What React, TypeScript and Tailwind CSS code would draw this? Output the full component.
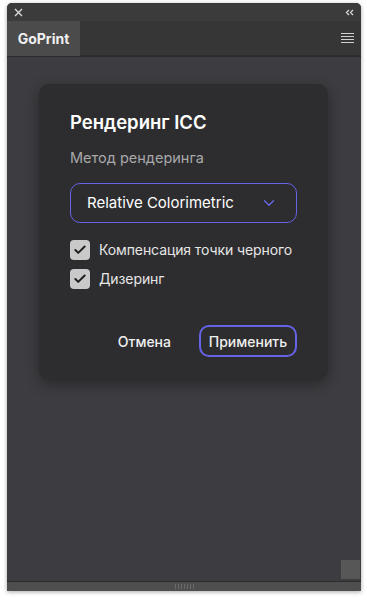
import { Check, ChevronDown } from 'lucide-react';

function Checkbox({ label }: { label: string }) {
  return (
    <div className="flex items-center gap-[9px]">
      <div className="w-[20px] h-[20px] rounded-[4px] bg-[#c9c9c9] flex items-center justify-center shrink-0">
        <Check className="w-[14px] h-[14px] text-[#1e1e1e]" strokeWidth={3.4} />
      </div>
      <span className="text-[14px] tracking-[-0.1px] text-[#e6e6e6] whitespace-nowrap">{label}</span>
    </div>
  );
}

export default function App() {
  return (
    <div className="w-[367px] h-[600px] bg-white pt-[3px] px-[7px]" style={{ fontFamily: 'Inter, "Noto Sans", sans-serif' }}>
      <div className="w-[354px] h-[588px] flex flex-col rounded-t-[5px] overflow-hidden shadow-[0_1px_4px_rgba(0,0,0,0.35)] bg-[#3c3c3f]">
        {/* title bar */}
        <div className="h-[18px] bg-[#3b3b3b] flex items-center justify-between px-[7px] shrink-0">
          <svg width="9" height="9" viewBox="0 0 9 9">
            <path d="M1 1L8 8M8 1L1 8" stroke="#d8d8d8" strokeWidth="1.4" />
          </svg>
          <svg width="9" height="7" viewBox="0 0 9 7">
            <path d="M4 1L1.5 3.5L4 6M8 1L5.5 3.5L8 6" stroke="#d8d8d8" strokeWidth="1.3" fill="none" />
          </svg>
        </div>
        {/* tab row */}
        <div className="h-[36px] bg-[#363636] flex items-stretch border-b border-[#2a2a2a] shrink-0">
          <div className="w-[73px] bg-[#4b4b4b] flex items-center justify-center text-[#f0f0f0] text-[14px] font-bold">
            GoPrint
          </div>
          <div className="flex-1 border-b border-[#2e2e2e] flex items-center justify-end pr-[7px]">
            <div className="flex flex-col gap-[1.5px] w-[13px]">
              <div className="h-[1.5px] bg-[#cfcfcf]" />
              <div className="h-[1.5px] bg-[#cfcfcf]" />
              <div className="h-[1.5px] bg-[#cfcfcf]" />
              <div className="h-[1.5px] bg-[#cfcfcf]" />
            </div>
          </div>
        </div>
        {/* body */}
        <div className="flex-1 bg-[#3d3d41] flex flex-col relative">
          <div className="pt-[27px] pl-[32px]">
            <div className="w-[289px] h-[296px] rounded-[10px] bg-[#2d2d2f] shadow-[0_4px_14px_rgba(0,0,0,0.35)] px-[31px] pt-[26px]">
              <div className="text-[18.5px] font-semibold text-white leading-[24px]">Рендеринг ICC</div>
              <div className="mt-[14px] text-[14.5px] text-[#a8a8aa] leading-[20px]">Метод рендеринга</div>
              <div className="mt-[15px] h-[40px] w-[227px] rounded-[10px] border-[1.5px] border-[#6563e6] flex items-center justify-between pl-[16px] pr-[18px]">
                <span className="text-[15px] text-white">Relative Colorimetric</span>
                <ChevronDown className="w-[18px] h-[18px] text-[#6d6bf0]" strokeWidth={1.6} />
              </div>
              <div className="mt-[16px] flex flex-col gap-[8px]">
                <Checkbox label="Компенсация точки черного" />
                <Checkbox label="Дизеринг" />
              </div>
              <div className="mt-[36px] flex items-center justify-end gap-[28px]">
                <span className="text-[14px] font-medium text-[#f0f0f0]">Отмена</span>
                <div className="w-[98px] h-[32px] rounded-[10px] border-2 border-[#6563e6] flex items-center justify-center text-[14px] font-medium text-[#f0f0f0]">
                  Применить
                </div>
              </div>
            </div>
          </div>
          <div className="absolute right-[1px] bottom-[2px] w-[19px] h-[19px] bg-[#575757]" />
        </div>
        {/* bottom bar */}
        <div className="h-[10px] bg-[#4e4e4e] border-t border-[#2c2c2c] flex items-center justify-center shrink-0">
          <div className="flex gap-[2px]">
            {[0, 1, 2, 3, 4, 5, 6].map((i) => (
              <div key={i} className="w-[1px] h-[5px] bg-[#6a6a6a]" />
            ))}
          </div>
        </div>
      </div>
    </div>
  );
}
